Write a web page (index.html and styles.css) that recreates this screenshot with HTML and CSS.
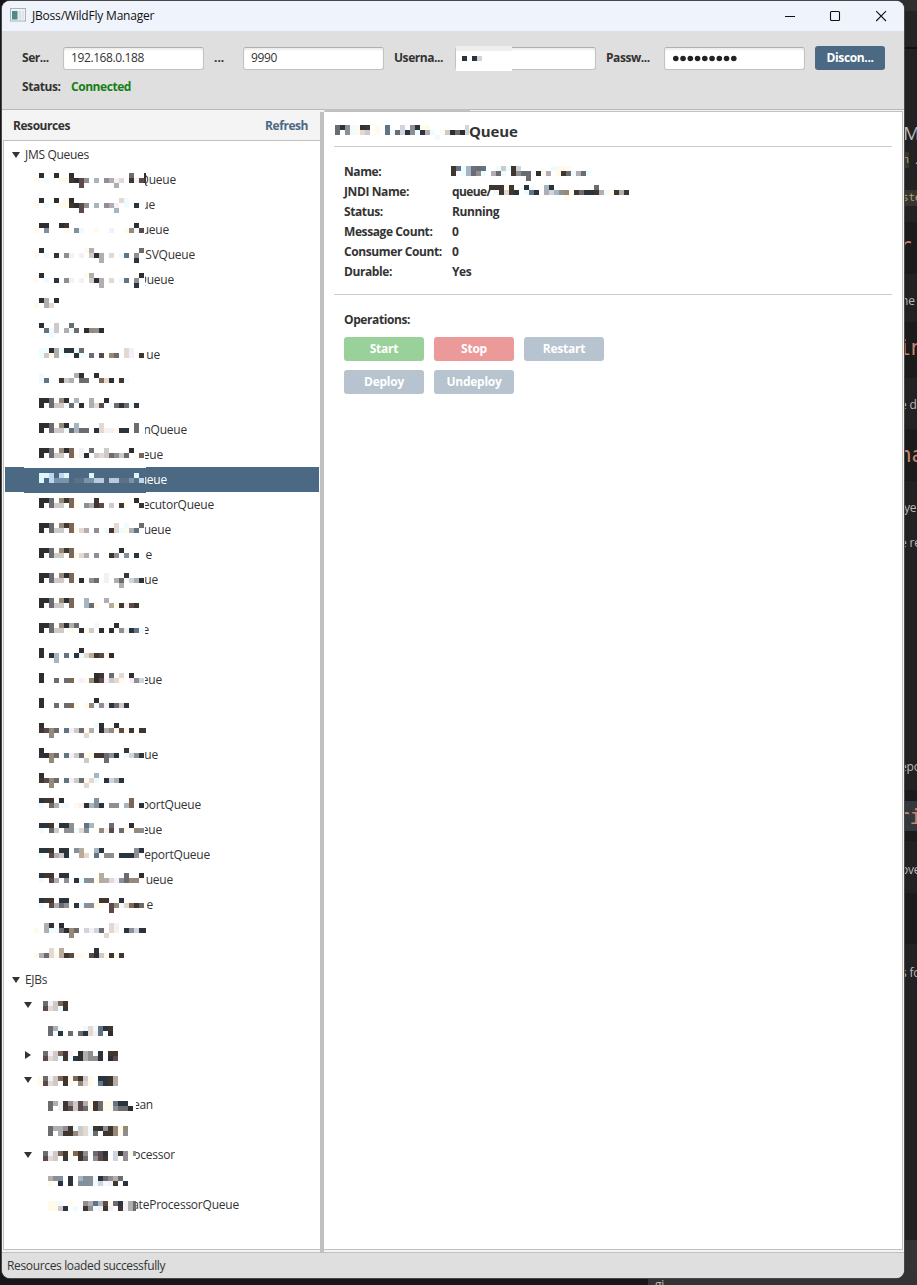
FILE: index.html
```html
<!DOCTYPE html>
<html lang="en">
<head>
<meta charset="utf-8">
<title>JBoss/WildFly Manager</title>
<link rel="stylesheet" href="styles.css">
</head>
<body>
<div class="desktop" id="desktop"></div>
<main class="window">
  <header class="titlebar">
    <svg class="app-icon" width="16" height="14" viewBox="0 0 16 14">
      <rect x="0.5" y="0.5" width="15" height="12.5" fill="#eef2f3" stroke="#a9b4b9"/>
      <rect x="2" y="3" width="5.5" height="8.5" fill="#4f8a86"/>
      <rect x="8.5" y="3" width="2.5" height="8.5" fill="#d5e3e1"/>
      <rect x="12" y="3" width="2" height="8.5" fill="#dfe5e6"/>
    </svg>
    <span class="app-title">JBoss/WildFly Manager</span>
    <svg class="controls" width="104" height="12" viewBox="0 0 104 12" fill="none" stroke="#111" stroke-width="1.1">
      <path d="M0 6.5H10"/>
      <rect x="45.5" y="1.5" width="9" height="9" rx="1"/>
      <path d="M91.2 1.2l9.8 9.8M101 1.2L91.2 11"/>
    </svg>
  </header>
  <section class="toolbar">
    <div class="form-row">
      <span class="lbl l-server">Ser...</span><span class="field">192.168.0.188</span>
      <span class="lbl l-port">...</span><span class="field">9990</span>
      <span class="lbl l-user">Userna...</span><span class="field user"><span class="patch" data-mosaic="user"></span></span>
      <span class="lbl l-pass">Passw...</span><span class="field"><svg width="66" height="8" id="dots" fill="#222"></svg></span>
      <button class="disconnect">Discon...</button>
    </div>
    <div class="status-row"><span class="lbl l-status">Status:</span><span class="connected">Connected</span></div>
  </section>
  <section class="content">
    <aside class="side">
      <div class="side-head"><b>Resources</b><b class="refresh">Refresh</b></div>
      <div class="tree" id="tree"></div>
    </aside>
    <div class="splitter"></div>
    <article class="details">
      <div class="edge-patch"></div>
      <h1><span data-mosaic="title"></span><span class="heading-text">Queue</span></h1>
      <dl>
        <dt>Name:</dt><dd><span class="m-name" data-mosaic="name"></span></dd>
        <dt>JNDI Name:</dt><dd><span class="jndi">queue/</span><span class="m-jndi" data-mosaic="jndi"></span></dd>
        <dt>Status:</dt><dd>Running</dd>
        <dt>Message Count:</dt><dd>0</dd>
        <dt>Consumer Count:</dt><dd>0</dd>
        <dt>Durable:</dt><dd>Yes</dd>
      </dl>
      <div class="ops">
        <span class="ops-label">Operations:</span>
        <div class="buttons">
          <button class="start">Start</button><button class="stop">Stop</button><button>Restart</button>
          <button>Deploy</button><button>Undeploy</button>
        </div>
      </div>
    </article>
  </section>
  <footer class="statusbar">Resources loaded successfully</footer>
</main>
<script src="script.js"></script>
</body>
</html>
```

FILE: styles.css
```css
* { box-sizing: border-box; }
body { margin: 0; width: 917px; height: 1285px; overflow: hidden; position: relative; background: #171719; font: 12px/20px "Open Sans", "Noto Sans", sans-serif; color: #333; letter-spacing: -0.2px; }
svg { display: block; flex: none; }
.desktop { position: absolute; inset: 0; overflow: hidden; }
.desktop i { position: absolute; display: block; }
.desktop span { position: absolute; white-space: pre; line-height: 20px; color: #b9bbbe; }
.desktop .code { font-family: "DejaVu Sans Mono", monospace; color: #c58570; font-size: 21px; }
.desktop .chip { font-family: "DejaVu Sans Mono", monospace; color: #b6a27d; background: #38342e; font-size: 11px; line-height: 16px; }
.window { position: relative; margin-left: 2px; top: 1px; width: 902px; height: 1277px; border-radius: 8px; overflow: hidden; display: flex; flex-direction: column; background: #f4f4f4; box-shadow: 0 0 0 1px #484848; }
.titlebar { height: 30px; flex: none; background: #eff3fb; display: flex; align-items: center; padding: 0 15px 1px 8px; color: #111; }
.app-icon { margin-bottom: 1px; }
.app-title { margin-left: 6px; flex: 1; letter-spacing: -0.2px; }
.controls { margin-top: 1px; }
.toolbar { height: 79px; flex: none; background: #dfdfdf; border-bottom: 1px solid #b8b8b8; padding: 15px 19px 0 20px; }
.form-row { display: flex; height: 24px; align-items: center; }
.lbl, .connected { font-weight: bold; white-space: nowrap; flex: none; letter-spacing: -0.45px; }
.l-server { width: 41px; }
.l-port { width: 39px; padding-left: 10px; letter-spacing: 0; }
.l-user { width: 71px; padding-left: 10px; }
.l-pass { width: 68px; padding-left: 10px; }
.field { width: 141px; height: 23px; flex: none; background: #fff; border: 1px solid #c2c2c2; border-top-color: #b0b0b0; border-radius: 3px; box-shadow: inset 0 2px 2px #eee; padding-left: 7px; display: flex; align-items: center; letter-spacing: -0.4px; }
.field.user { padding: 0; position: relative; }
.patch { position: absolute; left: 0; top: -2px; width: 56px; height: 25px; background: linear-gradient(#eee 5px, #fff 5px); padding: 10px 0 0 6px; }
button { border: 0; border-radius: 3px; background: #b7c3cf; color: #fff; font: bold 12px/20px "Open Sans", sans-serif; width: 80px; height: 24px; padding: 0; letter-spacing: -0.25px; }
.disconnect { width: 70px; margin-left: 10px; background: #4b6983; letter-spacing: -0.35px; }
.status-row { display: flex; margin-top: 7px; }
.l-status { width: 49px; }
.connected { color: #148014; }
.content { flex: 1; display: flex; min-height: 0; }
.side { width: 318px; flex: none; display: flex; flex-direction: column; }
.side-head { height: 30px; flex: none; display: flex; justify-content: space-between; align-items: center; padding: 2px 12px 0 11px; letter-spacing: -0.45px; }
.refresh { color: #4b6983; }
.tree { flex: 1; border: 1px solid #c0c0c0; border-right: 0; margin: 0 0 2px 1px; padding: 1px 1px 0; background: #fff; }
.row { height: 25px; display: flex; align-items: center; overflow: hidden; }
/* The masked part of the selected row hangs one pixel lower than the rest. */
.row.sel { color: #fff; overflow: visible; position: relative; background: linear-gradient(90deg, transparent 19px, #fff 19px 141px, transparent 141px) top / 100% 1px no-repeat, #4b6983; }
.row.sel::after { content: ""; position: absolute; left: 19px; top: 25px; width: 122px; height: 1px; background: #4b6983; }
.arrow { flex: none; width: 8px; }
.row .name { margin-left: 5px; letter-spacing: -0.3px; }
.tail { height: 20px; display: flex; justify-content: flex-end; overflow: hidden; flex: none; letter-spacing: -0.22px; }
.queue .mosaic { margin-left: 29px; margin-top: 2px; }
.queue .tail { margin-left: -1px; }
.ejb .mosaic { margin-top: 3px; }
.parent .arrow { margin-left: 19px; }
.parent .mosaic { margin-left: 6px; }
.leaf .mosaic { margin-left: 33px; }
.splitter { width: 4px; flex: none; background: #c0c0c0; margin-top: 2px; }
.details { flex: 1; position: relative; margin: 1px 1px 2px 0; border: solid #c0c0c0; border-width: 1px 1px 1px 0; background: #fff; padding: 0 10px; }
.edge-patch { position: absolute; left: 1px; top: -3px; width: 145px; height: 3px; background: #c0c0c0; }
h1 { margin: 0; height: 35px; border-bottom: 1px solid #ccc; font-size: 15px; letter-spacing: -0.1px; display: flex; align-items: center; padding: 4px 0 0 1px; }
h1 .mosaic { margin-top: 3px; }
.heading-text { line-height: 20px; margin-top: -1px; }
dl { margin: 0; height: 148px; border-bottom: 1px solid #ccc; padding: 15px 10px 0; display: grid; grid-template-columns: 108px 1fr; grid-auto-rows: 20px; font-weight: bold; letter-spacing: -0.4px; }
dd { margin: 0; display: flex; align-items: center; }
.jndi { width: 37px; white-space: nowrap; letter-spacing: -0.6px; }
.m-name { margin-left: -1px; padding-top: 3px; }
.m-jndi { padding-top: 1px; }
.ops { padding: 15px 10px; }
.ops-label { font-weight: bold; letter-spacing: -0.4px; display: block; margin-bottom: 7px; }
.buttons { display: grid; grid-template-columns: repeat(3, 80px); gap: 9px 10px; }
.start { background: #9ad09a; }
.stop { background: #eb9999; }
.statusbar { height: 26px; flex: none; border-top: 1px solid #c0c0c0; background: #dfdfdf; padding: 3px 5px; letter-spacing: -0.35px; }
```

FILE: script.js
```js
const palette = {
  k:'#2e2e31', K:'#403630', n:'#2b333c', d:'#5c4a4a', g:'#6b6b70', G:'#8f8f93', h:'#b0aeb1', l:'#cfcaca',
  b:'#627383', B:'#a6b5c2', i:'#8091a0', w:'#97897a', t:'#b9ab99', T:'#e3d9d1', y:'#fffaea', p:'#f5eff6',
  c:'#eefcff', r:'#7c6656', s:'#cfd5de', A:'#dff6ff', e:'#b9d7f5', f:'#7b93a6', v:'#5d7185', u:'#bcc9dc'
};

// Each string is one line of 5px cells; a dot is an empty cell.
function mosaic(lines, width, height) {
  let cells = '';
  lines.forEach((line, y) => [...line].forEach((ch, x) => {
    if (palette[ch]) cells += `<rect x="${x * 5}" y="${y * 5}" width="5" height="5" fill="${palette[ch]}"/>`;
  }));
  return `<svg class="mosaic" width="${width}" height="${height}" shape-rendering="crispEdges">${cells}</svg>`;
}

const queues = [
  ['.k..k..k...........g..k', 'y.c..yyKkdG.B.GhpT.KpdK', '.........d......h', 'Queue', 176],
  ['.k..k.yk.........Tc', 'y.c..yyKkdG.B.GhpPc.n', '.........d......B', 'ue', 155],
  ['.kk..kK.............k', 'y.i...y.ic..y..p..ywcd', '', 'ueue', 169],
  ['.k........yh.........g', 'y.c.n.Gp.p.lkh.T.cb.G', '.............h......n', 'SVQueue', 195],
  ['.k........yh.........k', 'y.c.n.Gp.p.lkh.T.cb.G', '.............h......n', 'Queue', 174],
  ['.kh.k', 'y.hT', '', '', 0],
  ['.k..l..g', '..bcl.hcg.kwGk', '...c', '', 0],
  ['.cckhcnncg........Tp', '.clyh.c.nc.g.d.wg.Tp.K', '', 'ue', 160],
  ['.c......hk..k', '.cb..Klh.gg..rTk.Kc', '', '', 0],
  ['.kkg.wk.B..h..k', '.k.gllcg.k.hTd.cgngcn', '', '', 0],
  ['.kkg.wk.B....T......g', '.k.gllcgBgg.nTppynn.g', '', 'nQueue', 187],
  ['.kkg.wkr.p.g..l....k', '.k.gll.rypk.lTlgGlg..r', '', 'eue', 163],
  ['.AAe.eA....A........A', '.A.efff.vvffuu.uuvvfve', '', 'ueue', 167],
  ['.kkg.wKr....K.......k', '.k.gll.ry.GhKd.l.Ky..K', '', 'ecutorQueue', 214],
  ['.kkg.wKr........T.c..g', '.k.gll.ryTh.G.cKTcyhb', '', 'ueue', 171],
  ['.kkg.wKr.........k', '.k.gll.ryTh.G..KG.i.n', '', 'e', 152],
  ['.kkg.wkr......p...K', '.k.gll.r.k.Gg.p.hg.shn', '.................h', 'ue', 158],
  ['.kkg.wkr..B...h', '.k.gll.r..Bgy..tyKpdK', '', '', 0],
  ['.kkg.wkhg...c...k', '.k.gll.y.kyl.k.k.Gpnbc', '', 'e', 149],
  ['.k.......k', '.k.nB.b.ncTtKdyk', '....B', '', 0],
  ['.k..........kK.g.T.k', '.k..g.gr.pywkdplTy.pGs', '', 'eue', 162],
  ['.k..........k', '.k..g.gry.ywcGpngln', '', '', 0],
  ['.k..........ck..k', '.Kdwg.bplgyh.khwydyK.KK', '...w......T', '', 0],
  ['.k................K', '.nkwg.bplgyyKKgGn.csGn', '...w......l...g', 'ue', 158],
  ['.k..........B', '.Kdwg.bplgyTc.nshn', '...w......T', '', 0],
  ['.nKK.k......i......r', '.c.ghcc.ypkBin.GG.Br.n', '', 'portQueue', 201],
  ['.nnK.nnG..bB...g...k', '.c.gl.GGcTi..wpd.gy.wG', '', 'eue', 162],
  ['.nnK.nn.it..Bn......Gn', '.c.dhln..tT.b.GG.nnnG', '', 'eportQueue', 210],
  ['.nKK.nn......t....g..k', '.c.dh.G.nciGythTpigww', '', 'ueue', 173],
  ['.nKK.nn......KK..n', '.c.dhgG.nciGyy.dwcTrKg', '...............d', 'e', 153],
  ['..hn.k.........Tp', 'y.hccgkwg.spsg.Tp.nGsnn', '.......w......T', '', 0],
  ['...T.t......n', 'yhgTytKdyy.dklyKyK', '', '', 0]
];

// [has children: 'open' | 'closed' | '', mosaic lines, visible text, right edge]
const ejbs = [
  ['open', '.gplrK', '.dTlcK', '', 0],
  ['', '..ghc....cTcbnK', '..gcn.g.gnTpb.k', '', 0],
  ['closed', '.gplrKp.khG.n.KK', '.dTlcKcnkhGGn.kd', '', 0],
  ['open', 'ygplrKyrKly.nnKt', 'ydTl.Ky.wTy.bnKh', '', 0],
  ['', '..ghpKGldhyKgyybnn', '..g.pKdldgyKgyyGggk', 'ean', 153],
  ['', '..ghhGKclTcKnGKwyw', '..g.hKKwlTcg.KKwyG', '', 0],
  ['open', '.gplrKyrKG.gdn.sKGyG', '.dTl.KcyKg.GdK.s.G', 'ocessor', 175],
  ['', '..hGi.n.BiGcngGhg', '..y.n.n.iiGcscpK.n', '', 0],
  ['', '..yyc.y..GhbBdygnphg', '..yyln.c.KGcpKp.Kphg', 'ateProcessorQueue', 239]
];

const arrow = state => `<svg class="arrow" width="8" height="8" fill="#333"><path d="${state === 'closed' ? 'M1 0V8L7 4Z' : 'M0 1H8L4 7Z'}"/></svg>`;
const tail = (text, from, to) => text ? `<span class="tail" style="width:${to - from}px">${text}</span>` : '';
const group = name => `<div class="row group" style="padding-left:7px">${arrow('open')}<span class="name">${name}</span></div>`;

let html = group('JMS Queues');
queues.forEach(([a, b, c, text, end], i) => {
  html += `<div class="row queue${i === 12 ? ' sel' : ''}">${mosaic([a, b, c], 112, 15)}${tail(text, 145, end)}</div>`;
});
html += group('EJBs');
ejbs.forEach(([state, a, b, text, end]) => {
  html += `<div class="row ejb ${state ? 'parent' : 'leaf'}">${state ? arrow(state) : ''}${mosaic([a, b], 98, 10)}${tail(text, 136, end)}</div>`;
});
document.getElementById('tree').innerHTML = html;

const patches = {
  user: [['n.ns'], 20, 5],
  title: [['gnGcynK.y.b..s.Gnyy.......s', 'g.GcyTl.y.bcgsnGcnhc.ylkgks', '....................c'], 134, 15],
  name: [['KbcBbgb..clcKs......cyyy', 'K.cBgGc.hgc.KGgg.kyh.yKgchgc', '...............g'], 140, 15],
  jndi: [['KKKyK..nc..Bn........g', '.cKTKn.cbn.hsBGwyKgnnKhcyKhK', '...............y'], 140, 15]
};
document.querySelectorAll('[data-mosaic]').forEach(el => { el.innerHTML = mosaic(...patches[el.dataset.mosaic]); });

document.getElementById('dots').innerHTML = Array.from({ length: 9 }, (_, i) => `<circle cx="${3.8 + i * 7.25}" cy="4.5" r="2.8"/>`).join('');

const bands = [
  [0, 11, '#2f2f2f'], [11, 36, '#242424'], [47, 2, '#111'], [49, 1236, '#222'], [222, 52, '#1b1b1b'], [322, 56, '#1b1b1b'], [429, 52, '#1b1b1b'],
  [790, 51, '#1b1b1b'], [801, 30, '#34373b'], [893, 51, '#1b1b1b'], [1240, 45, '#343434']
];
const snippets = [
  [903, 123, 'M', 'font-size:19px'], [896, 152, ' n', '', 'chip'], [915, 150, '.', ''], [902, 190, 'ste', '', 'chip'],
  [899, 236, 'r', '', 'code'], [901, 291, 'ne', ''], [898, 338, 'in', '', 'code'], [900, 395, 'e d', ''],
  [899, 445, 'na', '', 'code'], [904, 498, 'ye', ''], [900, 533, 'e re', ''], [900, 757, 'epo', ''],
  [897, 807, 'ri', '', 'code'], [901, 860, 'ove', ''], [901, 963, 's fo', ''], [655, 1275, 'gi', '']
];
document.getElementById('desktop').innerHTML =
  bands.map(([y, h, c]) => `<i style="left:890px;width:27px;top:${y}px;height:${h}px;background:${c}"></i>`).join('') +
  '<i style="left:648px;width:269px;top:1270px;height:15px;background:#333"></i>' +
  snippets.map(([x, y, t, s, k]) => `<span class="${k || ''}" style="left:${x}px;top:${y}px;${s}">${t}</span>`).join('');
```
